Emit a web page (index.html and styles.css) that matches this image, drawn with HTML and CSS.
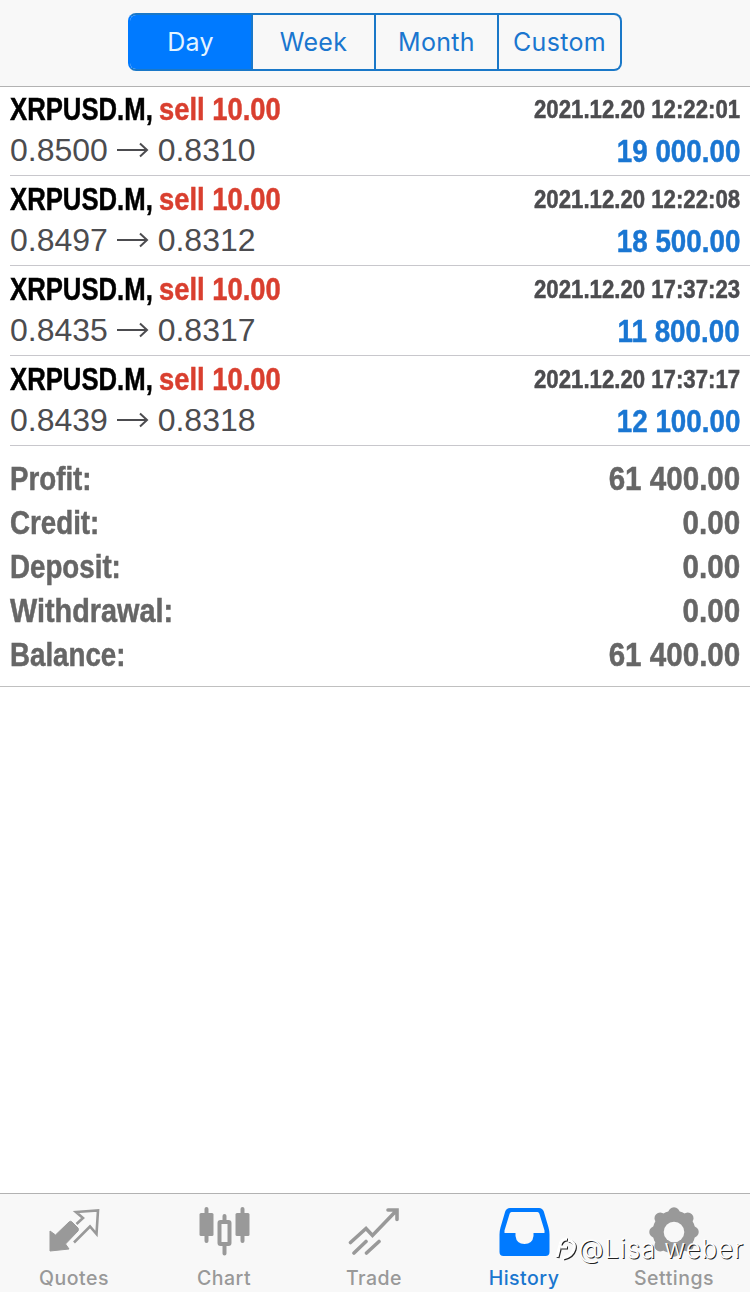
FILE: index.html
```html
<!DOCTYPE html>
<html lang="en">
<head>
  <meta charset="UTF-8">
  <meta name="viewport" content="width=device-width, initial-scale=1.0">
  <title>History</title>
  <link rel="stylesheet" href="styles.css">
</head>
<body>

  <!-- Period switch -->
  <header>
    <div class="segments">
      <button class="active">Day</button>
      <button>Week</button>
      <button>Month</button>
      <button>Custom</button>
    </div>
  </header>

  <!-- Closed deals -->
  <main>
    <ul class="deals">
      <li class="deal">
        <div class="line"><div class="title"><span class="symbol">XRPUSD.M,</span> <span class="side">sell 10.00</span></div><time>2021.12.20 12:22:01</time></div>
        <div class="line"><span class="prices">0.8500 <svg class="arrow" viewBox="0 0 32 16"><path d="M0 8h30M23 1.500L30 8l-7 6.500"/></svg> 0.8310</span><span class="amount">19 000.00</span></div>
      </li>
      <li class="deal">
        <div class="line"><div class="title"><span class="symbol">XRPUSD.M,</span> <span class="side">sell 10.00</span></div><time>2021.12.20 12:22:08</time></div>
        <div class="line"><span class="prices">0.8497 <svg class="arrow" viewBox="0 0 32 16"><path d="M0 8h30M23 1.500L30 8l-7 6.500"/></svg> 0.8312</span><span class="amount">18 500.00</span></div>
      </li>
      <li class="deal">
        <div class="line"><div class="title"><span class="symbol">XRPUSD.M,</span> <span class="side">sell 10.00</span></div><time>2021.12.20 17:37:23</time></div>
        <div class="line"><span class="prices">0.8435 <svg class="arrow" viewBox="0 0 32 16"><path d="M0 8h30M23 1.500L30 8l-7 6.500"/></svg> 0.8317</span><span class="amount">11 800.00</span></div>
      </li>
      <li class="deal">
        <div class="line"><div class="title"><span class="symbol">XRPUSD.M,</span> <span class="side">sell 10.00</span></div><time>2021.12.20 17:37:17</time></div>
        <div class="line"><span class="prices">0.8439 <svg class="arrow" viewBox="0 0 32 16"><path d="M0 8h30M23 1.500L30 8l-7 6.500"/></svg> 0.8318</span><span class="amount">12 100.00</span></div>
      </li>
    </ul>

    <!-- Totals -->
    <dl class="summary">
      <div><dt>Profit:</dt><dd>61 400.00</dd></div>
      <div><dt>Credit:</dt><dd>0.00</dd></div>
      <div><dt>Deposit:</dt><dd>0.00</dd></div>
      <div><dt class="wide">Withdrawal:</dt><dd>0.00</dd></div>
      <div><dt>Balance:</dt><dd>61 400.00</dd></div>
    </dl>
  </main>

  <!-- Tab bar -->
  <nav>
    <a class="tab">
      <svg viewBox="0 0 52 52">
        <path d="M21 15Q22.500 13.500 24 15L30 21Q31 22.500 30 24L17.500 37l3.500 5L2 44V24l5.500 4z" fill="currentColor" stroke="currentColor" stroke-linejoin="round"/>
        <path d="M26 35.500L42 19.500l6.500 7.500L50 3.500 28 5l7 6-6.500 6" fill="none" stroke="currentColor" stroke-width="2.600"/>
      </svg>
      <span>Quotes</span>
    </a>
    <a class="tab">
      <svg viewBox="0 0 52 52">
        <path d="M8.500 2v32M44.500 2v32M26.500 9v8M26.500 38v8.500" stroke="currentColor" stroke-width="4" stroke-linecap="round"/>
        <rect x="1.500" y="6" width="14" height="23" rx="1.500" fill="currentColor"/>
        <rect x="37.500" y="6" width="14" height="23" rx="1.500" fill="currentColor"/>
        <rect x="21.500" y="15" width="10" height="22" rx="1" fill="#f8f8f8" stroke="currentColor" stroke-width="4"/>
      </svg>
      <span>Chart</span>
    </a>
    <a class="tab">
      <svg viewBox="0 0 52 52" fill="none" stroke="currentColor" stroke-width="3.600" stroke-linecap="round">
        <path d="M2.500 35.500L18 21.500l6.500 7L48 4M40 3h9v9.500M6 46L18 34.500M18.500 46L31 34.500"/>
      </svg>
      <span>Trade</span>
    </a>
    <a class="tab active">
      <svg viewBox="0 0 52 52">
        <path fill="currentColor" fill-rule="evenodd" d="M12 1h29q3.500 0 4.800 3.500l4.700 16q1 3.500 1 7V45q0 4-4 4h-42q-4 0-4-4V27.500q0-3.500 1-7l4.700-16Q8.500 1 12 1zM13.500 5q-1.300 0-1.800 1.500L6.500 23.500v2.500h11v3q1 8 9 8t9-8v-3H46.500v-2.500L41.300 6.500Q40.800 5 39.500 5z"/>
      </svg>
      <span>History</span>
    </a>
    <a class="tab">
      <svg viewBox="0 0 52 52">
        <circle cx="26" cy="25" r="21.500" fill="currentColor"/>
        <path d="M26 6v38M7 25h38M12.200 11.200l27.600 27.600M12.200 38.800l27.600-27.600" stroke="currentColor" stroke-width="11.500" stroke-linecap="round"/>
        <circle cx="26" cy="25" r="10.300" fill="#f8f8f8"/>
      </svg>
      <span>Settings</span>
    </a>
    <div class="watermark">
      <svg viewBox="0 0 24 28"><path d="M3 22L6 10q1-6 7-6M7 12h6M14 5q8 2 6 9t-11 9"/></svg>
      <span>@Lisa weber</span>
    </div>
  </nav>

</body>
</html>
```

FILE: styles.css
```css
/* Reset & base */
* { margin: 0; padding: 0; box-sizing: border-box; }
body {
  display: flex;
  flex-direction: column;
  height: 1292px;
  overflow: hidden;
  background: #fff;
  color: #4c4c4f;
  font-family: "Liberation Sans", Arial, sans-serif;
}
main { flex: 1; }
ul { list-style: none; }

/* Header */
header {
  display: flex;
  justify-content: center;
  height: 87px;
  margin-bottom: -1px;
  padding-top: 13px;
  background: #f8f8f8;
  border-bottom: 1px solid #b2b2b2;
}
.segments {
  display: flex;
  width: 494px;
  height: 58px;
  border: 2px solid #1a78c8;
  border-radius: 8px;
  overflow: hidden;
}
.segments button {
  flex: 1;
  border: 0;
  border-left: 2px solid #1a78c8;
  background: transparent;
  color: #1a76cf;
  font: 400 25px Inter, sans-serif;
  letter-spacing: 0.3px;
}
.segments button:first-child { border-left: 0; }
.segments .active { background: #007aff; color: #e4f4ff; }
.segments:has(.active:first-child) { border-left-color: #007aff; }

/* Deals */
.deal {
  height: 90px;
  margin-left: 10px;
  padding: 3px 10px 0 0;
  border-bottom: 1px solid #c8c7cc;
}
.line { display: flex; justify-content: space-between; align-items: center; height: 41px; }

/* Condensed bold lettering */
.title, time, .amount, .summary {
  font-weight: bold;
  white-space: nowrap;
  -webkit-text-stroke: 0.5px currentColor;
}
.title { display: flex; font-size: 32px; }
.symbol { width: 149px; color: #000; transform: scaleX(0.803); transform-origin: left; }
.side { color: #d93f2f; transform: scaleX(0.855); transform-origin: left; }
time { font-size: 25px; transform: scaleX(0.888); transform-origin: right; }
.amount { padding-top: 2px; color: #1a76d2; font-size: 32px; transform: scaleX(0.868); transform-origin: right; }

.prices { font-size: 32px; }
.arrow { width: 32px; height: 16px; fill: none; stroke: #4c4c4f; stroke-width: 2; vertical-align: 3px; }

/* Totals */
.summary {
  padding: 10px;
  border-bottom: 1px solid #c0c0c0;
  color: #666;
  font-size: 34px;
}
.summary div { display: flex; justify-content: space-between; align-items: center; height: 44px; }
.summary dt { transform: scaleX(0.815); transform-origin: left; }
.summary .wide { transform: scaleX(0.848); }
.summary dd { transform: scaleX(0.87); transform-origin: right; }

/* Tab bar */
nav {
  position: relative;
  display: flex;
  height: 99px;
  background: #f8f8f8;
  border-top: 1px solid #b2b2b2;
}
.tab {
  display: flex;
  flex-direction: column;
  align-items: center;
  width: 150px;
  padding: 13px 2px 0 0;
  color: #999;
  font: 500 19.500px/24px Inter, sans-serif;
  letter-spacing: 0.5px;
}
.tab svg { width: 52px; height: 52px; margin-bottom: 7px; }
.tab.active { color: #007aff; }
.tab.active span { color: #1a76cf; }

/* Author mark over the tab bar */
.watermark {
  position: absolute;
  right: 6px;
  bottom: 28px;
  display: flex;
  align-items: center;
  color: #fff;
  font: 300 26px/30px Inter, sans-serif;
  letter-spacing: 0.8px;
  text-shadow: 1px 1px 0.5px #222;
}
.watermark svg { width: 24px; height: 28px; fill: none; stroke: #fff; stroke-width: 3; filter: drop-shadow(1px 1px 0.5px #222); }
```
